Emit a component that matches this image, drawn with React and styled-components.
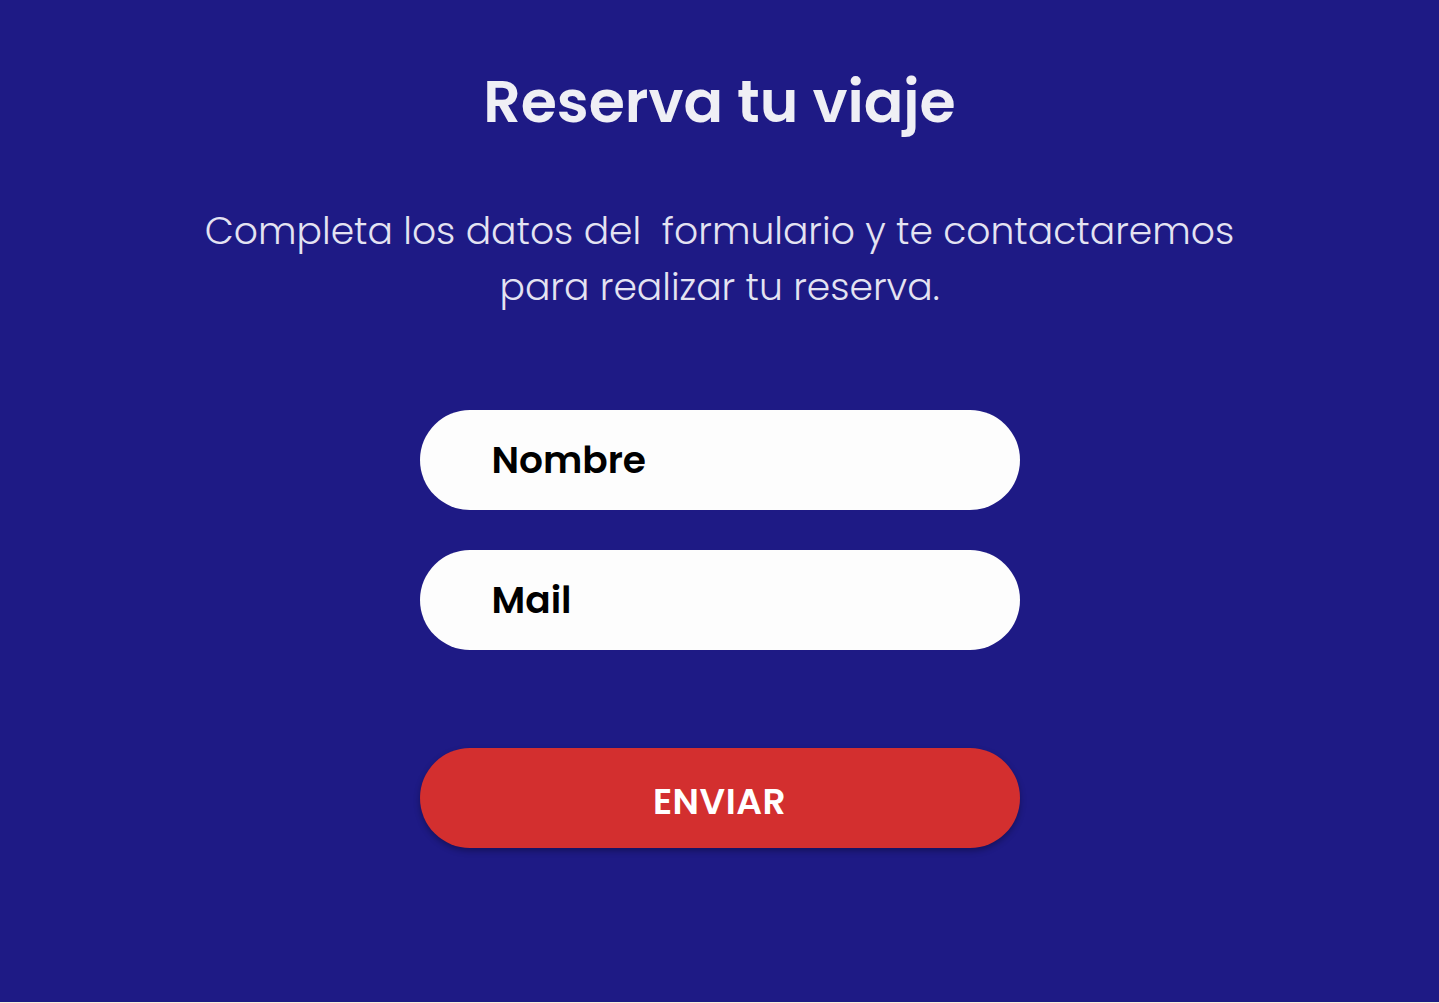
import { styled, createGlobalStyle } from "styled-components";

const GlobalStyle = createGlobalStyle`
  * { box-sizing: border-box; }
  body {
    margin: 0;
    background: #f4f0dc;
    font-family: Poppins, "Open Sans", sans-serif;
  }
`;

const App = () => {
  return (
    <>
      <GlobalStyle />
      <Container>
        <Title>Reserva tu viaje</Title>
        <Subtitle>
          Completa los datos del&nbsp; formulario y te contactaremos
          <br />
          para realizar tu reserva.
        </Subtitle>
        <Form onSubmit={(e) => e.preventDefault()}>
          <Field type="text" placeholder="Nombre" />
          <Field type="email" placeholder="Mail" />
          <SendButton type="submit">ENVIAR</SendButton>
        </Form>
      </Container>
    </>
  );
};

const Container = styled.section`
  height: 1002px;
  background-color: #1e1a85;
  display: flex;
  flex-direction: column;
  align-items: center;
  padding-top: 60px;
  text-align: center;
`;

const Title = styled.h1`
  margin: 0;
  color: #efeff5;
  font-size: 58.5px;
  font-weight: 600;
  line-height: 84px;
`;

const Subtitle = styled.p`
  margin: 59px 0 0;
  color: #e4e3f2;
  font-size: 37.7px;
  font-weight: 300;
  line-height: 56px;
`;

const Form = styled.form`
  margin-top: 95px;
  width: 600px;
  display: flex;
  flex-direction: column;
  gap: 40px;
`;

const Field = styled.input`
  height: 100px;
  width: 100%;
  border: none;
  border-radius: 50px;
  background: #fdfdfd;
  padding: 0 72px;
  font-family: inherit;
  font-size: 37.5px;
  font-weight: 600;
  color: #000;
  outline: none;

  &::placeholder {
    color: #000;
    opacity: 1;
  }
`;

const SendButton = styled.button`
  margin-top: 58px;
  height: 100px;
  width: 100%;
  border: none;
  border-radius: 50px;
  background: #d32f2f;
  color: #fff;
  padding: 6px 0 0;
  font-family: inherit;
  font-size: 36px;
  font-weight: 600;
  letter-spacing: 0.5px;
  box-shadow: 0 3px 6px rgba(0, 0, 0, 0.3);
  cursor: pointer;
`;

export default App;
